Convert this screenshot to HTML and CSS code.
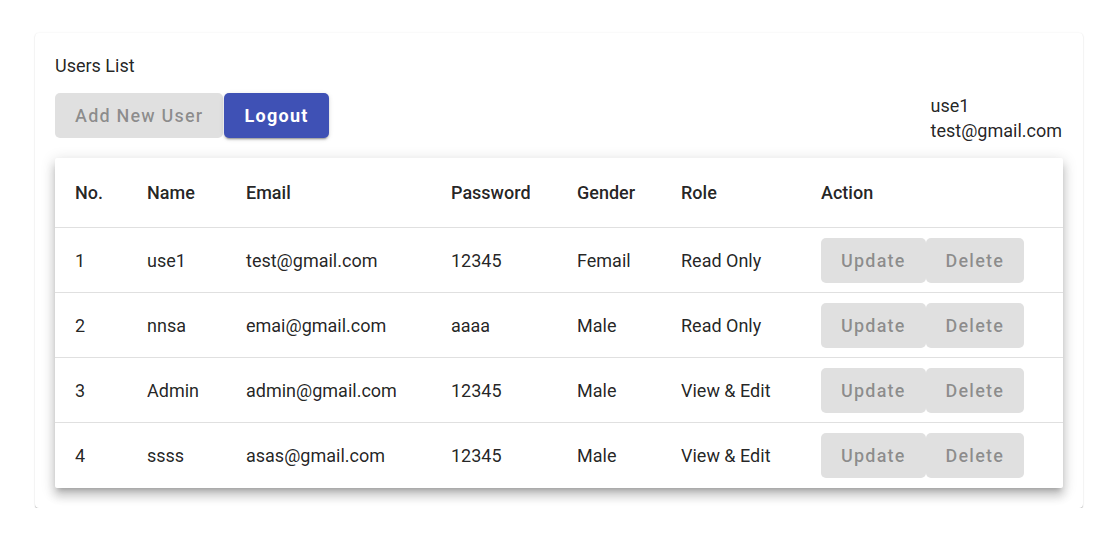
FILE: index.html
```html
<!DOCTYPE html>
<html>
<head>
<meta charset="utf-8">
<link rel="stylesheet" href="styles.css">
</head>
<body>
<div class="page">
  <div class="card">
    <div class="title">Users List</div>
    <div class="toolbar">
      <div class="actions">
        <button class="btn btn-disabled" disabled>Add New User</button>
        <button class="btn btn-primary">Logout</button>
      </div>
      <div class="userinfo">
        <div>use1</div>
        <div>test@gmail.com</div>
      </div>
    </div>
    <div class="table-paper">
      <table class="table">
        <colgroup>
          <col class="c-no"><col class="c-name"><col class="c-email"><col class="c-pass"><col class="c-gender"><col class="c-role"><col class="c-action">
        </colgroup>
        <thead>
          <tr><th>No.</th><th>Name</th><th>Email</th><th>Password</th><th>Gender</th><th>Role</th><th>Action</th></tr>
        </thead>
        <tbody>
          <tr><td>1</td><td>use1</td><td>test@gmail.com</td><td>12345</td><td>Femail</td><td>Read Only</td><td><div class="row-actions"><button class="btn btn-disabled" disabled>Update</button><button class="btn btn-disabled" disabled>Delete</button></div></td></tr>
          <tr><td>2</td><td>nnsa</td><td>emai@gmail.com</td><td>aaaa</td><td>Male</td><td>Read Only</td><td><div class="row-actions"><button class="btn btn-disabled" disabled>Update</button><button class="btn btn-disabled" disabled>Delete</button></div></td></tr>
          <tr><td>3</td><td>Admin</td><td>admin@gmail.com</td><td>12345</td><td>Male</td><td>View &amp; Edit</td><td><div class="row-actions"><button class="btn btn-disabled" disabled>Update</button><button class="btn btn-disabled" disabled>Delete</button></div></td></tr>
          <tr><td>4</td><td>ssss</td><td>asas@gmail.com</td><td>12345</td><td>Male</td><td>View &amp; Edit</td><td><div class="row-actions"><button class="btn btn-disabled" disabled>Update</button><button class="btn btn-disabled" disabled>Delete</button></div></td></tr>
        </tbody>
      </table>
    </div>
  </div>
</div>
</body>
</html>
```
FILE: styles.css
```css
* { box-sizing: border-box; }
html, body { margin: 0; padding: 0; background: #fff; }
body {
  font-family: Roboto, "Liberation Sans", Arial, sans-serif;
  color: rgba(0, 0, 0, 0.87);
}
.page {
  padding: 33px 10px 0 35px;
}
.card {
  width: 1048px;
  background: #fff;
  border-radius: 4px;
  padding: 20px;
  box-shadow: 0px 1px 1px 0px rgba(0,0,0,0.25), 0px 0px 2px 0px rgba(0,0,0,0.08);
}
.title {
  font-size: 18px;
  line-height: 26px;
  margin-bottom: 14px;
}
.toolbar {
  display: flex;
  justify-content: space-between;
  align-items: flex-start;
  margin-bottom: 15px;
}
.actions {
  display: flex;
}
.userinfo {
  font-size: 18px;
  line-height: 25px;
  padding-right: 1px;
}
.btn {
  font-family: Roboto, "Liberation Sans", Arial, sans-serif;
  font-size: 18px;
  font-weight: 500;
  letter-spacing: 1.2px;
  height: 45px;
  padding: 0 20px;
  border: none;
  border-radius: 5px;
  line-height: 45px;
  cursor: pointer;
}
.btn-disabled {
  background: #e0e0e0;
  color: rgba(0, 0, 0, 0.38);
  cursor: default;
}
.btn-primary {
  background: #3f51b5;
  color: #fff;
  font-weight: 700;
  margin-left: 1px;
  letter-spacing: 1.3px;
  box-shadow: 0px 3px 1px -2px rgba(0,0,0,0.2), 0px 2px 2px 0px rgba(0,0,0,0.14), 0px 1px 5px 0px rgba(0,0,0,0.12);
}
.table-paper {
  background: #fff;
  border-radius: 2px;
  box-shadow: 0px 5px 5px -3px rgba(0,0,0,0.2), 0px 8px 10px 1px rgba(0,0,0,0.14), 0px 3px 14px 2px rgba(0,0,0,0.12);
}
.table {
  width: 100%;
  table-layout: fixed;
  border-collapse: collapse;
  font-size: 18px;
}
.c-no { width: 72px; }
.c-name { width: 99px; }
.c-email { width: 205px; }
.c-pass { width: 126px; }
.c-gender { width: 104px; }
.c-role { width: 140px; }
.c-action { width: 262px; }
.table th {
  text-align: left;
  font-weight: 500;
  line-height: 27px;
  padding: 21px 20px;
  border-bottom: 1px solid #e0e0e0;
  white-space: nowrap;
}
.table td {
  text-align: left;
  font-weight: 400;
  line-height: 27px;
  height: 65px;
  padding: 0 20px;
  vertical-align: middle;
  border-bottom: 1px solid #e0e0e0;
  white-space: nowrap;
}
.table tbody tr:last-child td {
  border-bottom: none;
}
.row-actions {
  display: flex;
}
```
